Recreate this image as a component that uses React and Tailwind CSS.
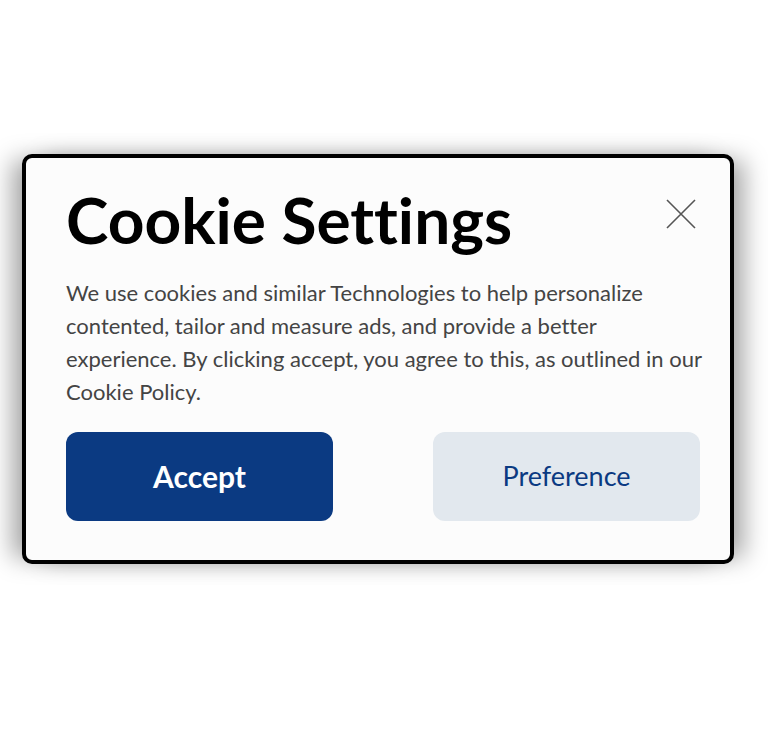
export default function App() {
  return (
    <div className="w-[768px] h-[740px] bg-white font-['Lato','Noto_Sans',sans-serif] [font-variant-ligatures:none]">
      <div className="ml-[22px] pt-[154px]">
        <div className="w-[712px] h-[410px] border-4 border-black rounded-[10px] bg-[#fcfcfc] pl-[40px] pr-[30px] pt-[22px] shadow-[-16px_0_24px_-6px_rgba(0,0,0,0.35),16px_0_24px_-6px_rgba(0,0,0,0.35)]">
          <div className="flex items-start justify-between">
            <h1 className="text-[64px] leading-[80px] font-bold text-black">Cookie Settings</h1>
            <button className="mt-[19px] mr-[4px]">
              <svg width="30" height="30" viewBox="0 0 30 30" fill="none" stroke="#555" strokeWidth="1.6">
                <path d="M1 1L29 29M29 1L1 29" />
              </svg>
            </button>
          </div>
          <p className="mt-[16px] w-[638px] text-[22px] leading-[33px] text-[#444]">
            We use cookies and similar Technologies to help personalize contented, tailor and measure ads, and provide a better experience. By clicking accept, you agree to this, as outlined in our Cookie Policy.
          </p>
          <div className="mt-[24px] flex justify-between">
            <button className="w-[267px] h-[89px] rounded-[12px] bg-[#0b3a82] text-white text-[30px] font-bold">
              Accept
            </button>
            <button className="w-[267px] h-[89px] rounded-[12px] bg-[#e2e8ee] text-[#0b3a82] text-[27px]">
              Preference
            </button>
          </div>
        </div>
      </div>
    </div>
  );
}
